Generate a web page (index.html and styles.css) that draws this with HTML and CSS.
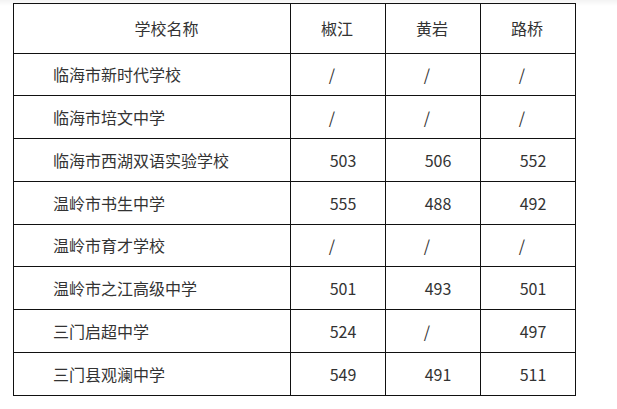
FILE: index.html
```html
<!DOCTYPE html>
<html lang="zh-CN">
<head>
<meta charset="utf-8">
<title>学校分数线</title>
<link rel="stylesheet" href="styles.css">
</head>
<body>
<table class="score-table">
  <colgroup>
    <col class="col-name">
    <col class="col-area">
    <col class="col-area">
    <col class="col-area">
  </colgroup>
  <thead>
    <tr class="head-row">
      <th class="head-name">学校名称</th>
      <th class="head-area">椒江</th>
      <th class="head-area">黄岩</th>
      <th class="head-area">路桥</th>
    </tr>
  </thead>
  <tbody>
    <tr>
      <td class="name">临海市新时代学校</td>
      <td class="na">/</td>
      <td class="na">/</td>
      <td class="na">/</td>
    </tr>
    <tr>
      <td class="name">临海市培文中学</td>
      <td class="na">/</td>
      <td class="na">/</td>
      <td class="na">/</td>
    </tr>
    <tr>
      <td class="name">临海市西湖双语实验学校</td>
      <td class="num">503</td>
      <td class="num">506</td>
      <td class="num">552</td>
    </tr>
    <tr>
      <td class="name">温岭市书生中学</td>
      <td class="num">555</td>
      <td class="num">488</td>
      <td class="num">492</td>
    </tr>
    <tr>
      <td class="name">温岭市育才学校</td>
      <td class="na">/</td>
      <td class="na">/</td>
      <td class="na">/</td>
    </tr>
    <tr>
      <td class="name">温岭市之江高级中学</td>
      <td class="num">501</td>
      <td class="num">493</td>
      <td class="num">501</td>
    </tr>
    <tr>
      <td class="name">三门启超中学</td>
      <td class="num">524</td>
      <td class="na">/</td>
      <td class="num">497</td>
    </tr>
    <tr>
      <td class="name">三门县观澜中学</td>
      <td class="num">549</td>
      <td class="num">491</td>
      <td class="num">511</td>
    </tr>
  </tbody>
</table>
</body>
</html>
```
FILE: styles.css
```css
html {
  background: linear-gradient(#f3f3f3, #ffffff 6px) no-repeat, #ffffff;
}

body {
  margin: 0;
  padding: 3px 0 0 13px;
  font-family: "Noto Sans CJK SC", "Noto Sans", sans-serif;
  font-size: 16px;
  color: #333333;
}

.score-table {
  border-collapse: collapse;
  table-layout: fixed;
  width: 563px;
}

.col-name {
  width: 277px;
}

.col-area {
  width: 95px;
}

.score-table th,
.score-table td {
  border: 1px solid #111111;
  padding: 0;
  font-weight: normal;
  line-height: 20px;
  vertical-align: middle;
  white-space: nowrap;
}

.score-table .head-row {
  height: 49.5px;
}

.score-table tbody tr {
  height: 42.75px;
}

.score-table .head-name {
  text-align: center;
  padding-left: 29px;
}

.score-table .head-area {
  text-align: center;
  padding-right: 2px;
}

.score-table .name {
  text-align: left;
  padding-left: 39px;
}

.score-table .num {
  text-align: center;
  padding-left: 10px;
}

.score-table .na {
  text-align: center;
  padding-right: 12px;
}
```
